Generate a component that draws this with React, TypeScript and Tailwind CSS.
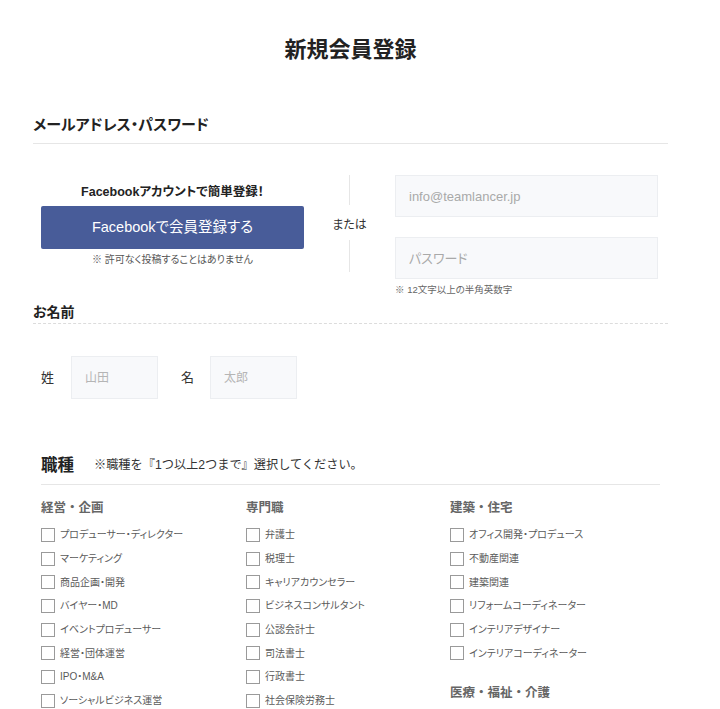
import React from "react";

const font = "font-['Liberation_Sans','Noto_Sans_CJK_JP',sans-serif] [font-feature-settings:'palt']";

type JobGroup = {
  title: string;
  items: string[];
};

const columns: JobGroup[][] = [
  [
    {
      title: "経営・企画",
      items: [
        "プロデューサー・ディレクター",
        "マーケティング",
        "商品企画・開発",
        "バイヤー・MD",
        "イベントプロデューサー",
        "経営・団体運営",
        "IPO・M&A",
        "ソーシャルビジネス運営",
      ],
    },
  ],
  [
    {
      title: "専門職",
      items: [
        "弁護士",
        "税理士",
        "キャリアカウンセラー",
        "ビジネスコンサルタント",
        "公認会計士",
        "司法書士",
        "行政書士",
        "社会保険労務士",
      ],
    },
  ],
  [
    {
      title: "建築・住宅",
      items: [
        "オフィス開発・プロデュース",
        "不動産関連",
        "建築関連",
        "リフォームコーディネーター",
        "インテリアデザイナー",
        "インテリアコーディネーター",
      ],
    },
    { title: "医療・福祉・介護", items: [] },
  ],
];

function Check({ label }: { label: string }) {
  return (
    <label className="flex h-[23.7px] items-center gap-[5px]">
      <span className="h-[14px] w-[14px] shrink-0 border border-[#9a9a9a] bg-white" />
      <span className="text-[10px] text-[#5a5a5a]">{label}</span>
    </label>
  );
}

export default function App() {
  return (
    <div className={`${font} min-h-[709px] bg-white text-[#222]`}>
      <div className="mx-[33px] w-[635px] pt-[34px]">
        <h1 className="text-center text-[22px] font-bold leading-[32px] text-[#222]">新規会員登録</h1>

        {/* email / password */}
        <h2 className="mt-[48px] border-b border-[#e6e6e6] pb-[7px] text-[15px] font-bold leading-[22px]">
          メールアドレス・パスワード
        </h2>

        <div className="mt-[31px] flex items-start">
          <div className="ml-[8px] w-[263px] pt-[9px] text-center">
            <p className="text-[12.5px] font-bold leading-[17px] text-[#222]">Facebookアカウントで簡単登録！</p>
            <button className="mt-[5px] h-[43px] w-full rounded-[2px] bg-[#485c99] text-[14.5px] text-white">
              Facebookで会員登録する
            </button>
            <p className="mt-[3px] text-[10px] leading-[16px] text-[#555]">※ 許可なく投稿することはありません</p>
          </div>

          <div className="flex w-[91px] flex-col items-center">
            <span className="h-[30px] w-px bg-[#e6e6e6]" />
            <span className="mt-[11px] text-[12px] leading-[18px] text-[#333]">または</span>
            <span className="mt-[6px] h-[32px] w-px bg-[#e6e6e6]" />
          </div>

          <div className="w-[263px]">
            <input
              className="block h-[42px] w-full border border-[#eceef1] bg-[#f8f9fb] px-[13px] text-[13px] outline-none placeholder:text-[#a9a9a9]"
              placeholder="info@teamlancer.jp"
            />
            <input
              type="password"
              className="mt-[20px] block h-[42px] w-full border border-[#eceef1] bg-[#f8f9fb] px-[13px] text-[13px] outline-none placeholder:text-[#a9a9a9]"
              placeholder="パスワード"
            />
            <p className="mt-[4px] text-[9.5px] leading-[14px] text-[#666]">※ 12文字以上の半角英数字</p>
          </div>
        </div>

        {/* name */}
        <h2 className="mt-[5px] border-b border-dashed border-[#dcdcdc] pb-px text-[14px] font-bold leading-[20px]">お名前</h2>

        <div className="mt-[32px] ml-[8px] flex items-center">
          <span className="text-[13px] text-[#333]">姓</span>
          <input
            className="ml-[17px] h-[43px] w-[87px] border border-[#eceef1] bg-[#f8f9fb] px-[13px] text-[12px] outline-none placeholder:text-[#b5b5b5]"
            placeholder="山田"
          />
          <span className="ml-[23px] text-[13px] text-[#333]">名</span>
          <input
            className="ml-[16px] h-[43px] w-[87px] border border-[#eceef1] bg-[#f8f9fb] px-[13px] text-[12px] outline-none placeholder:text-[#b5b5b5]"
            placeholder="太郎"
          />
        </div>

        {/* jobs */}
        <div className="mx-[8px] mt-[54px] flex items-center border-b border-[#e6e6e6] pb-[7px]">
          <h2 className="text-[16.5px] font-bold leading-[24px] text-[#222]">職種</h2>
          <p className="ml-[20px] text-[12.2px] text-[#333] [font-feature-settings:normal]">
            ※職種を『1つ以上2つまで』選択してください。
          </p>
        </div>

        <div className="mx-[8px] mt-[14px] grid grid-cols-[205px_204px_1fr]">
          {columns.map((groups, ci) => (
            <div key={ci}>
              {groups.map((g, gi) => (
                <div key={g.title} className={gi > 0 ? "mt-[19px]" : ""}>
                  <h3 className="text-[12.5px] font-bold leading-[18px] text-[#666] [font-feature-settings:normal]">
                    {g.title}
                  </h3>
                  {g.items.length > 0 && (
                    <div className="mt-[6px]">
                      {g.items.map((item) => (
                        <Check key={item} label={item} />
                      ))}
                    </div>
                  )}
                </div>
              ))}
            </div>
          ))}
        </div>
      </div>
    </div>
  );
}
